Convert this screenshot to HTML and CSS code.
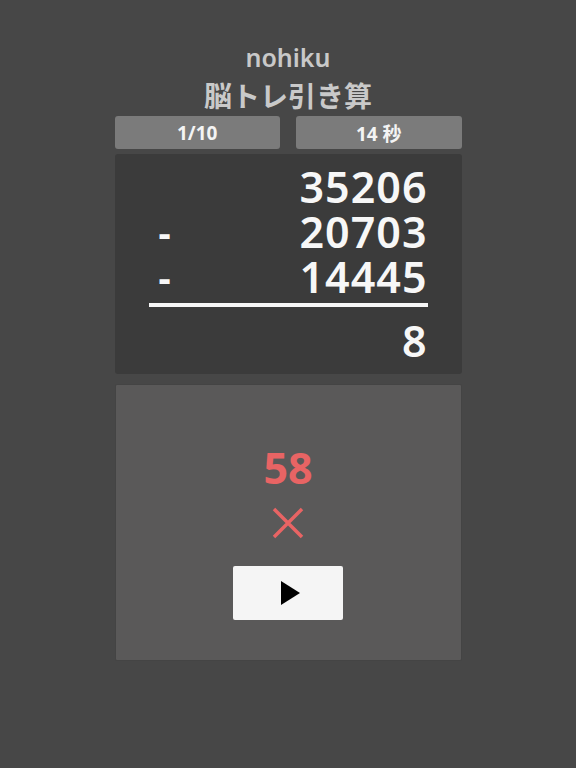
FILE: index.html
```html
<!DOCTYPE html>
<html lang="ja">
<head>
<meta charset="utf-8">
<link rel="stylesheet" href="styles.css">
</head>
<body>
<div class="app">
  <h1 class="title">nohiku</h1>
  <h2 class="subtitle">脳トレ引き算</h2>
  <div class="status">
    <div class="badge">1/10</div>
    <div class="badge">14 秒</div>
  </div>
  <div class="problem">
    <div class="row"><span class="op"></span><span class="num">35206</span></div>
    <div class="row"><span class="op">-</span><span class="num">20703</span></div>
    <div class="row"><span class="op">-</span><span class="num">14445</span></div>
    <div class="rule"></div>
    <div class="row answer"><span class="op"></span><span class="num">8</span></div>
  </div>
  <div class="result">
    <div class="correct">58</div>
    <svg class="cross" width="32" height="32" viewBox="0 0 32 32"><path d="M2 2 L30 30 M30 2 L2 30" stroke="#e86464" stroke-width="3.5" fill="none"/></svg>
    <button class="next"><svg width="19" height="24" viewBox="0 0 19 24"><path d="M0 0 L19 12 L0 24 Z" fill="#000"/></svg></button>
  </div>
</div>
</body>
</html>
```
FILE: styles.css
```css
html, body {
  margin: 0;
  padding: 0;
  background: #474747;
  height: 100%;
}
body {
  font-family: "Noto Sans", "Noto Sans CJK JP", sans-serif;
}
.app {
  width: 347px;
  margin: 0 auto;
  padding-top: 40px;
  display: flex;
  flex-direction: column;
}
.title {
  margin: 0;
  text-align: center;
  font-size: 25px;
  font-weight: 600;
  line-height: 34px;
  color: #c9c9c9;
}
.subtitle {
  margin: 2px 0 0 0;
  text-align: center;
  font-family: "Noto Sans CJK JP", sans-serif;
  font-size: 28px;
  font-weight: 700;
  line-height: 38px;
  color: #c9c9c9;
}
.status {
  margin-top: 2px;
  display: flex;
  gap: 16px;
}
.badge {
  flex: 1;
  height: 33px;
  background: #7b7b7b;
  border-radius: 3px;
  color: #f4f4f4;
  font-family: "Noto Sans", "Noto Sans CJK JP", sans-serif;
  font-size: 19px;
  font-weight: 700;
  display: flex;
  align-items: center;
  justify-content: center;
}
.problem {
  margin-top: 5px;
  background: #3b3b3b;
  border-radius: 3px;
  padding: 10px 34px 6px 34px;
  color: #f7f7f7;
  height: 220px;
  box-sizing: border-box;
}
.row {
  display: flex;
  justify-content: space-between;
  align-items: center;
  height: 45px;
  font-size: 43px;
  font-weight: 600;
  letter-spacing: 1px;
}
.op {
  padding-left: 10px;
  font-size: 38px;
  font-weight: 700;
}
.num {
  line-height: 45px;
}
.rule {
  height: 4px;
  background: #f7f7f7;
  margin: 4px 0 0 0;
}
.answer {
  margin-top: 11px;
}
.result {
  margin-top: 10px;
  height: 277px;
  box-sizing: border-box;
  background: #5a5959;
  border: 1px solid #444;
  border-radius: 2px;
  display: flex;
  flex-direction: column;
  align-items: center;
  padding-top: 60px;
}
.correct {
  color: #e86464;
  font-size: 43px;
  font-weight: 700;
  line-height: 46px;
}
.cross {
  margin-top: 16px;
  display: block;
}
.next {
  margin-top: 27px;
  width: 110px;
  height: 54px;
  background: #f5f5f5;
  border: none;
  border-radius: 2px;
  display: flex;
  align-items: center;
  justify-content: center;
  padding: 0 0 0 4px;
}
```
